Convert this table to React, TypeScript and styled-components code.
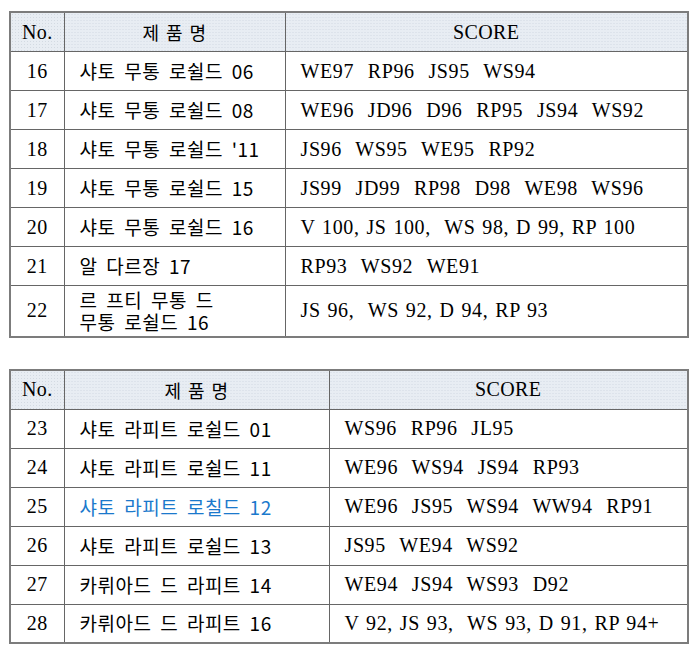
import React from "react";
import styled, { createGlobalStyle } from "styled-components";

const Global = createGlobalStyle`
  html, body { margin: 0; padding: 0; background: #ffffff; }
  body { font-family: "Liberation Serif", "Noto Sans CJK KR", serif; color: #111; }
`;

const Page = styled.div`
  display: flex;
  flex-direction: column;
  gap: 31px;
  padding: 11px 0 0 9px;
  width: 680px;
`;

const Table = styled.table`
  width: 680px;
  border-collapse: collapse;
  border: 2px solid #7c7c7c;
  table-layout: fixed;
`;

const HeadCell = styled.th<{ $serif?: boolean }>`
  height: 38px;
  padding: 0;
  background-color: #e8edf3;
  background-image: radial-gradient(rgba(150, 160, 175, 0.25) 0.6px, transparent 0.8px);
  background-size: 3px 3px;
  border: 1px solid #666;
  font-weight: normal;
  text-align: center;
  font-size: ${(p) => (p.$serif ? "20px" : "18px")};
  font-family: ${(p) =>
    p.$serif ? `"Liberation Serif", serif` : `"Noto Sans CJK KR", sans-serif`};
  letter-spacing: ${(p) => (p.$serif ? "0.4px" : "0.5px")};
  word-spacing: ${(p) => (p.$serif ? "0" : "2px")};
  color: #000;
`;

const Row = styled.tr<{ $tall?: boolean }>`
  height: ${(p) => (p.$tall ? "51px" : "39px")};
`;

const NoCell = styled.td`
  padding: 0;
  border: 1px solid #666;
  text-align: center;
  font-family: "Liberation Serif", serif;
  font-size: 20px;
  letter-spacing: 0.4px;
  color: #000;
`;

const NameCell = styled.td<{ $blue?: boolean }>`
  padding: 0 0 0 15px;
  border: 1px solid #666;
  font-family: "Noto Sans CJK KR", sans-serif;
  font-size: 19px;
  letter-spacing: 0.5px;
  word-spacing: 4px;
  line-height: 22px;
  white-space: pre;
  color: ${(p) => (p.$blue ? "#1b79cc" : "#000")};
`;

const ScoreCell = styled.td`
  padding: 0 0 0 15px;
  border: 1px solid #666;
  font-family: "Liberation Serif", serif;
  font-size: 20px;
  letter-spacing: 0.6px;
  word-spacing: 1.3px;
  white-space: pre;
  color: #000;
`;

type Item = { no: number; name: string; score: string; blue?: boolean; tall?: boolean };

const t1: Item[] = [
  { no: 16, name: "샤토 무통 로쉴드 06", score: "WE97  RP96  JS95  WS94" },
  { no: 17, name: "샤토 무통 로쉴드 08", score: "WE96  JD96  D96  RP95  JS94  WS92" },
  { no: 18, name: "샤토 무통 로쉴드 '11", score: "JS96  WS95  WE95  RP92" },
  { no: 19, name: "샤토 무통 로쉴드 15", score: "JS99  JD99  RP98  D98  WE98  WS96" },
  { no: 20, name: "샤토 무통 로쉴드 16", score: "V 100, JS 100,  WS 98, D 99, RP 100" },
  { no: 21, name: "알 다르장 17", score: "RP93  WS92  WE91" },
  { no: 22, name: "르 프티 무통 드\n무통 로쉴드 16", score: "JS 96,  WS 92, D 94, RP 93", tall: true },
];

const t2: Item[] = [
  { no: 23, name: "샤토 라피트 로쉴드 01", score: "WS96  RP96  JL95" },
  { no: 24, name: "샤토 라피트 로쉴드 11", score: "WE96  WS94  JS94  RP93" },
  { no: 25, name: "샤토 라피트 로칠드 12", score: "WE96  JS95  WS94  WW94  RP91", blue: true },
  { no: 26, name: "샤토 라피트 로쉴드 13", score: "JS95  WE94  WS92" },
  { no: 27, name: "카뤼아드 드 라피트 14", score: "WE94  JS94  WS93  D92" },
  { no: 28, name: "카뤼아드 드 라피트 16", score: "V 92, JS 93,  WS 93, D 91, RP 94+" },
];

function WineTable({ items, nameWidth }: { items: Item[]; nameWidth: number }) {
  return (
    <Table>
      <colgroup>
        <col style={{ width: 54 }} />
        <col style={{ width: nameWidth }} />
        <col />
      </colgroup>
      <thead>
        <tr>
          <HeadCell $serif>No.</HeadCell>
          <HeadCell>제 품 명</HeadCell>
          <HeadCell $serif>SCORE</HeadCell>
        </tr>
      </thead>
      <tbody>
        {items.map((it) => (
          <Row key={it.no} $tall={it.tall}>
            <NoCell>{it.no}</NoCell>
            <NameCell $blue={it.blue}>{it.name}</NameCell>
            <ScoreCell>{it.score}</ScoreCell>
          </Row>
        ))}
      </tbody>
    </Table>
  );
}

export default function App() {
  return (
    <>
      <Global />
      <Page>
        <WineTable items={t1} nameWidth={221} />
        <WineTable items={t2} nameWidth={265} />
      </Page>
    </>
  );
}
